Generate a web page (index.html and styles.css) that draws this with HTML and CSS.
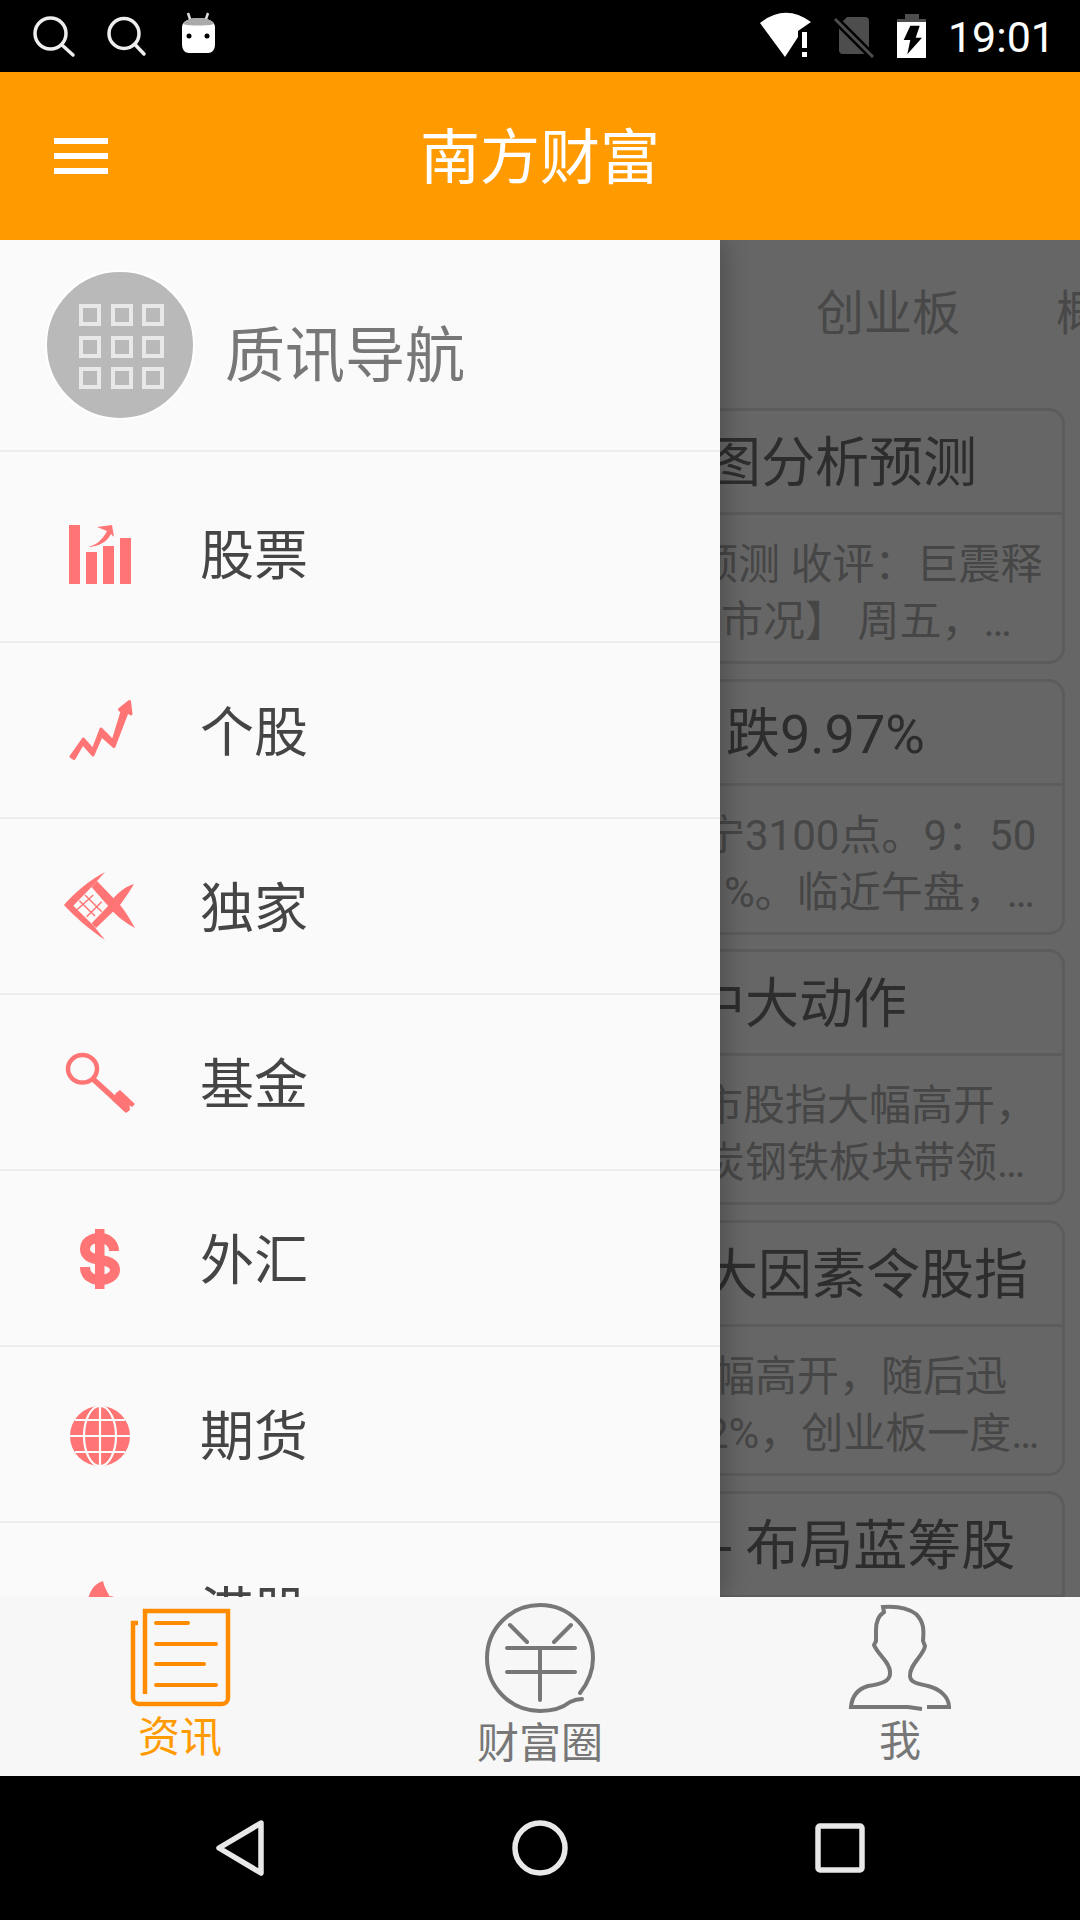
FILE: index.html
```html
<!DOCTYPE html>
<html lang="zh">
<head>
<meta charset="utf-8">
<title>南方财富</title>
<link rel="stylesheet" href="styles.css">
</head>
<body>
<div class="phone">
  <header class="status">
    <div class="status-left">
      <svg class="st-icon" viewBox="0 0 48 72"><circle cx="22.5" cy="33.5" r="15.5" fill="none" stroke="#eee" stroke-width="3.5"/><path d="M34 45L45 55" stroke="#eee" stroke-width="3.5" stroke-linecap="round"/></svg>
      <svg class="st-icon" viewBox="0 0 48 72"><circle cx="22" cy="33.5" r="15" fill="none" stroke="#eee" stroke-width="3.5"/><path d="M33 44.500L42 54" stroke="#eee" stroke-width="3.5" stroke-linecap="round"/></svg>
      <svg class="st-icon" viewBox="0 0 48 72"><path d="M12 13l3 9M32 13l-3 9" stroke="#ddd" stroke-width="2.5"/><path d="M6 27c0-6 8-9 16.500-9s16.500 3 16.500 9v17c0 6-3 9-7 9H13c-4 0-7-3-7-9z" fill="#fff"/><path d="M7 24c2-4 8-6 15.500-6s13.500 2 15.500 6c-5 2-26 2-31 0z" fill="#aaa"/><circle cx="13" cy="36" r="2.500"/><circle cx="31" cy="36" r="2.500"/></svg>
    </div>
    <div class="status-right">
      <svg class="st-wifi" viewBox="0 0 60 72"><path d="M6 23Q31 3 57 22L44 31V37L31 57Z" fill="#fff"/><path d="M48 32h5v16h-5zM48 52h5v5h-5z" fill="#fff"/></svg>
      <svg class="st-sim" viewBox="0 0 48 72"><path d="M17 17H35a4 4 0 0 1 4 4V50a4 4 0 0 1-4 4H13a4 4 0 0 1-4-4V25Z" fill="#4d4d4d"/><path d="M5 19L43 57" stroke="#000" stroke-width="8"/><path d="M5 19L43 57" stroke="#4d4d4d" stroke-width="3"/></svg>
      <svg class="st-bat" viewBox="0 0 44 72"><path d="M15 14h14v5h7v4H7v-4h8z" fill="#4d4d4d"/><path d="M7 19h29v39H7z" fill="#fff"/><path d="M7 19h29v3H7z" fill="#4d4d4d"/><path d="M20.300 25.700h9.400l-4 12H32L17.300 54.300l3-14.300h-6.600z" fill="#000"/></svg>
      <span class="time">19:01</span>
    </div>
  </header>

  <div class="appbar">
    <svg class="menu" viewBox="0 0 54 36"><path d="M0 0h54v6H0zM0 15h54v6H0zM0 30h54v6H0z" fill="#fff"/></svg>
    <h1 class="app-title">南方财富</h1>
  </div>

  <main class="main">
    <div class="content">
      <nav class="tabs"><span>创业板</span><span>概念</span></nav>

      <article class="card">
        <h2 class="card-title ct-1">图分析预测</h2>
        <div class="card-body">
          <p class="line d-1a">预测 收评：巨震释</p>
          <p class="line d-1b">市况】 周五，…</p>
        </div>
      </article>
      <article class="card">
        <h2 class="card-title ct-2">跌9.97%</h2>
        <div class="card-body">
          <p class="line d-2a">宁3100点。9：50</p>
          <p class="line d-2b">%。临近午盘，…</p>
        </div>
      </article>
      <article class="card">
        <h2 class="card-title ct-3">中大动作</h2>
        <div class="card-body">
          <p class="line d-3a">市股指大幅高开，</p>
          <p class="line d-3b">炭钢铁板块带领…</p>
        </div>
      </article>
      <article class="card">
        <h2 class="card-title ct-4">大因素令股指</h2>
        <div class="card-body">
          <p class="line d-4a">幅高开，随后迅</p>
          <p class="line d-4b">2%，创业板一度…</p>
        </div>
      </article>
      <article class="card">
        <h2 class="card-title ct-5">- 布局蓝筹股</h2>
      </article>
    </div>

    <div class="scrim"></div>

    <aside class="drawer">
      <div class="drawer-head">
        <svg class="avatar" viewBox="0 0 150 150">
          <circle cx="75" cy="75" r="74" fill="#b9b9b9" stroke="#fff" stroke-width="2"/>
          <g class="avatar-grid" fill="none" stroke="#e8e8e8" stroke-width="4">
            <rect x="36" y="36" width="18" height="18"/><rect x="68" y="36" width="18" height="18"/><rect x="99" y="36" width="18" height="18"/>
            <rect x="36" y="68" width="18" height="18"/><rect x="68" y="68" width="18" height="18"/><rect x="99" y="68" width="18" height="18"/>
            <rect x="36" y="99" width="18" height="18"/><rect x="68" y="99" width="18" height="18"/><rect x="99" y="99" width="18" height="18"/>
          </g>
        </svg>
        <span class="drawer-title">质讯导航</span>
      </div>

      <div class="row row-first">
        <svg class="row-icon" viewBox="0 0 80 80"><path d="M9 10h11v59H9zM26 37h11v32H26zM43 31h11v38H43zM60 23h11v46H60z" fill="#ff7575"/><path d="M28 32C37 30 43 24 47 16L37 12L52 10L54 22L51 19C47 27 38 32 28 32Z" fill="#ff7575"/></svg>
        <span class="row-label">股票</span>
      </div>
      <div class="row">
        <svg class="row-icon" viewBox="0 0 80 80"><path d="M11 66.500L23.300 49L33 60L41 39L53 51L62 21.700L59.500 19.500L69.500 11.500L71 24L67.300 21.700L54 56.500L41.500 45.500L33 65L22.700 53.500L14 68.500Z" fill="#ff7575" stroke="#ff7575" stroke-width="3" stroke-linejoin="round"/></svg>
        <span class="row-label">个股</span>
      </div>
      <div class="row">
        <svg class="row-icon" viewBox="0 0 80 80"><g fill="#ff7575"><path d="M4 39C14 27 30 14 45 6L33 19.500L13.300 39.700L33 59L45 74C30 64 14 50 4 39Z"/><path d="M37 15L60 39C66 46 71 55 75 62C66 57 56 50 50 42L31.700 21.300Z"/><path d="M74 18C65 21 56 27 48.300 39.700L31.700 57.300L36 62L60 39C65 32 70 25 74 18Z"/></g><path d="M19.300 34.700L35 50M25 29L41.700 45.700M33.300 29L16.700 44M41.700 35.700L26.700 50.700" stroke="#ff7575" stroke-width="1.500"/></svg>
        <span class="row-label">独家</span>
      </div>
      <div class="row">
        <svg class="row-icon" viewBox="0 0 80 80"><ellipse cx="22.500" cy="26.800" rx="14.500" ry="13.800" fill="none" stroke="#ff7575" stroke-width="4.500"/><path d="M33 37L67 68" stroke="#ff7575" stroke-width="5.500"/><path d="M56 51L60 48L75 62L72 65L69.500 63.500L70 68L66 71L52 58Z" fill="#ff7575"/></svg>
        <span class="row-label">基金</span>
      </div>
      <div class="row">
        <svg class="row-icon" viewBox="0 0 80 80"><path d="M35 11h9.500v60H35z" fill="#ff7575"/><path d="M54 33C54 24 46 20 40 20C30 20 25 25 25 31C25 39 33 41 40 42C48 43 55 46 55 52C55 58 48 62 40 62C32 62 25 58 25 49" fill="none" stroke="#ff7575" stroke-width="10"/></svg>
        <span class="row-label">外汇</span>
      </div>
      <div class="row">
        <svg class="row-icon" viewBox="0 0 80 80"><circle cx="40" cy="42" r="30" fill="#ff7575"/><g fill="none" stroke="#fafafa" stroke-width="2.200"><ellipse cx="40" cy="42" rx="16" ry="30"/><path d="M40 12V72M10 42H70M15 26H65M15 58H65"/></g></svg>
        <span class="row-label">期货</span>
      </div>
      <div class="row">
        <svg class="row-icon" viewBox="0 0 80 80"><path d="M43 11C33 14 27 24 27 40L52 40C54 28 45 22 43 11ZM10 30C14 28 18 30 20 40H10ZM50 26C56 26 58 32 58 40H52Z" fill="#ff7575"/></svg>
        <span class="row-label">港股</span>
      </div>
    </aside>
  </main>

  <nav class="tabbar">
    <div class="tab-item">
      <svg class="tab-icon" viewBox="0 0 120 120"><path d="M25 94V11H108V98a6 6 0 0 1-6 6H19a6 6 0 0 1-6-6V23H18" fill="none" stroke="#ff8c00" stroke-width="4.500"/><path d="M36 23H68M36 44H96M36 64H84M36 85H96" stroke="#ff8c00" stroke-width="4" stroke-linecap="round"/></svg>
      <span class="tab-label tab-active">资讯</span>
    </div>
    <div class="tab-item">
      <svg class="tab-icon" viewBox="0 0 120 120"><g fill="none" stroke="#777" stroke-width="4" stroke-linecap="round"><path d="M100 93C108 83 113 70 113 58A53 53 0 1 0 60 111C75 111 85 106 90 102C94 100 98 99 102 99"/><path d="M30 25L47 42M91 25L74 42M27 48H95M27 72H95M60 48V100"/></g></svg>
      <span class="tab-label tab-wealth">财富圈</span>
    </div>
    <div class="tab-item">
      <svg class="tab-icon" viewBox="0 0 120 120"><path d="M87 107H109C109 97 100 89 88 86C80 84 70 83 70 76C69 65 84 55 85 46L83 41C84 30 84 22 76 14C68 8 55 6 43 7L44 12C38 16 36 22 36 30L36 41L34 45C38 55 50 62 50 72C51 82 40 84 28 86C18 89 12 96 11 107H68L82 109" fill="none" stroke="#777" stroke-width="4"/></svg>
      <span class="tab-label tab-me">我</span>
    </div>
  </nav>

  <footer class="navbar">
    <svg class="nav-icon" viewBox="0 0 60 60"><path d="M51 5L9 30L51 55Z" fill="none" stroke="#e8e8e8" stroke-width="5.500" stroke-linejoin="round"/></svg>
    <svg class="nav-icon" viewBox="0 0 60 60"><circle cx="30" cy="30" r="25" fill="none" stroke="#e8e8e8" stroke-width="5.500"/></svg>
    <svg class="nav-icon" viewBox="0 0 60 60"><rect x="8" y="8" width="44" height="44" rx="2" fill="none" stroke="#e8e8e8" stroke-width="5.500"/></svg>
  </footer>
</div>
</body>
</html>
```

FILE: styles.css
```css
* { box-sizing: border-box; }
html, body { margin: 0; padding: 0; }
body { font-family: Roboto, "Noto Sans CJK SC", sans-serif; background: #000; }
h1, h2, p { margin: 0; font-weight: 400; }

.phone { width: 1080px; height: 1920px; display: flex; flex-direction: column; overflow: hidden; }

/* status bar */
.status { flex: 0 0 72px; background: #000; display: flex; justify-content: space-between; color: #fff; }
.status-left { display: flex; gap: 26px; padding-left: 28px; }
.status-right { display: flex; align-items: stretch; padding-right: 25px; }
.st-icon { width: 48px; height: 72px; }
.st-wifi { width: 60px; height: 72px; }
.st-sim { width: 48px; height: 72px; margin-left: 16px; }
.st-bat { width: 44px; height: 72px; margin-left: 12px; }
.time { font-size: 43px; line-height: 70px; padding-top: 2px; margin-left: 14px; }

/* app bar */
.appbar { flex: 0 0 168px; background: #ff9a00; position: relative; display: flex; align-items: center; justify-content: center; }
.menu { position: absolute; left: 54px; top: 66px; width: 54px; height: 36px; }
.app-title { font-size: 60px; line-height: 1; color: #fff; margin-top: 5px; }

/* main */
.main { flex: 1 1 auto; position: relative; overflow: hidden; background: #fff; }
.content { height: 100%; overflow: hidden; }
.tabs { height: 138px; padding-left: 816px; display: flex; gap: 96px; align-items: center; font-size: 48px; color: #b4b4b4; white-space: nowrap; }
.tabs span { flex: none; }
.card { margin: 30px 15px 0 16px; height: 256px; border: 3px solid #e6e6e6; border-radius: 16px; width: 1049px; }
.card + .card { margin-top: 14.7px; }
.card-title { height: 104px; border-bottom: 3px solid #e6e6e6; padding-top: 3px; font-size: 54px; line-height: 100px; color: #707070; white-space: nowrap; overflow: hidden; }
.card-body { padding-top: 21px; }
.line { font-size: 42px; line-height: 57px; color: #aeaeae; white-space: nowrap; overflow: hidden; }

.ct-1 { padding-left: 688px; }
.ct-2 { padding-left: 707px; }
.ct-3 { padding-left: 672px; }
.ct-4 { padding-left: 685px; }
.ct-5 { padding-left: 698px; }
.d-1a { padding-left: 677px; }
.d-1b { padding-left: 702px; }
.d-2a { padding-left: 684px; }
.d-2b { padding-left: 705px; }
.d-3a { padding-left: 682px; }
.d-3b { padding-left: 684px; }
.d-4a { padding-left: 694px; }
.d-4b { padding-left: 686px; }

.scrim { position: absolute; inset: 0; background: rgba(0, 0, 0, .6); }

/* drawer */
.drawer { position: absolute; left: 0; top: 0; bottom: 0; width: 720px; background: #fafafa; box-shadow: 6px 0 22px rgba(0, 0, 0, .22); overflow: hidden; }
.drawer-head { height: 212px; border-bottom: 2px solid #ededed; display: flex; align-items: center; padding-left: 45px; }
.avatar { width: 150px; height: 150px; flex: none; }
.avatar-grid { filter: blur(.5px); }
.drawer-title { font-size: 60px; line-height: 1; color: #777; margin: 24px 0 0 30px; }
.row { height: 176px; border-bottom: 2px solid #ededed; display: flex; align-items: center; padding-left: 60px; gap: 60px; }
.row-first { height: 191px; padding-top: 16px; }
.row-icon { width: 80px; height: 80px; flex: none; }
.row-label { font-size: 54px; line-height: 1; color: #454545; margin-top: 7px; }
.row-first .row-label { margin-top: 4px; }

/* bottom tabs */
.tabbar { flex: 0 0 179px; background: #f7f7f7; display: flex; padding-top: 3px; }
.tab-item { flex: 1 1 0; display: flex; flex-direction: column; align-items: center; }
.tab-icon { width: 120px; height: 120px; flex: none; }
.tab-label { font-size: 42px; line-height: 42px; color: #777; }
.tab-active { color: #ff9a00; margin-top: -3px; }
.tab-wealth { margin-top: 3px; }
.tab-me { margin-top: 1px; }

/* nav bar */
.navbar { flex: 0 0 144px; background: #000; display: flex; justify-content: center; align-items: center; }
.nav-icon { width: 60px; height: 60px; margin: 0 120px; }
```
